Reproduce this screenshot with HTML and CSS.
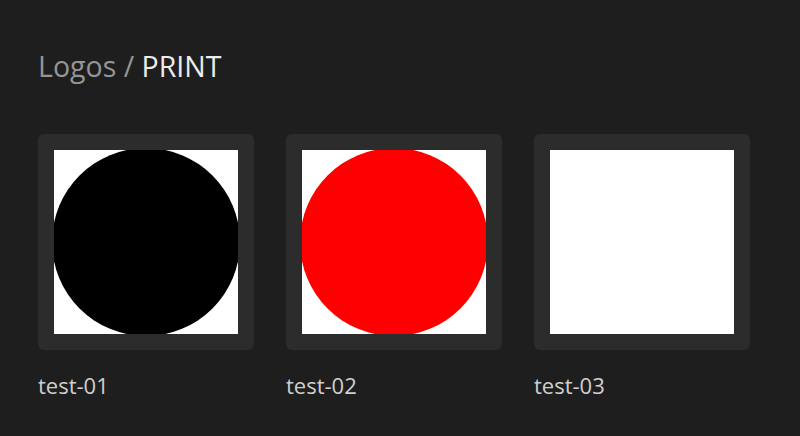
FILE: index.html
```html
<!DOCTYPE html>
<html>
<head>
<meta charset="utf-8">
<link rel="stylesheet" href="styles.css">
</head>
<body>
<div class="page">
  <h1 class="crumbs"><span class="parent">Logos /</span> <span class="current">PRINT</span></h1>
  <div class="grid">
    <div class="item">
      <div class="card"><div class="thumb"><div class="dot black"></div></div></div>
      <div class="label">test-01</div>
    </div>
    <div class="item">
      <div class="card"><div class="thumb"><div class="dot red"></div></div></div>
      <div class="label">test-02</div>
    </div>
    <div class="item">
      <div class="card"><div class="thumb"></div></div>
      <div class="label">test-03</div>
    </div>
  </div>
</div>
</body>
</html>
```
FILE: styles.css
```css
html, body {
  margin: 0;
  padding: 0;
  background: #1e1e1e;
  font-family: "Open Sans", "Noto Sans", sans-serif;
}
.page {
  padding: 48px 38px 0;
}
.crumbs {
  margin: 0;
  font-size: 28.5px;
  font-weight: 400;
  line-height: 36px;
}
.parent { color: #959595; }
.current { color: #ececec; }
.grid {
  display: flex;
  gap: 32px;
  margin-top: 50px;
}
.card {
  width: 216px;
  height: 216px;
  box-sizing: border-box;
  padding: 16px;
  background: #2c2c2c;
  border-radius: 6px;
}
.thumb {
  width: 184px;
  height: 184px;
  background: #ffffff;
  display: flex;
  align-items: center;
  justify-content: center;
  overflow: hidden;
}
.dot {
  flex: none;
  width: 188px;
  height: 188px;
  border-radius: 50%;
}
.black { background: #000000; }
.red { background: #ff0000; }
.label {
  margin-top: 20px;
  font-size: 22px;
  line-height: 30px;
  color: #cfcfcf;
}
```
